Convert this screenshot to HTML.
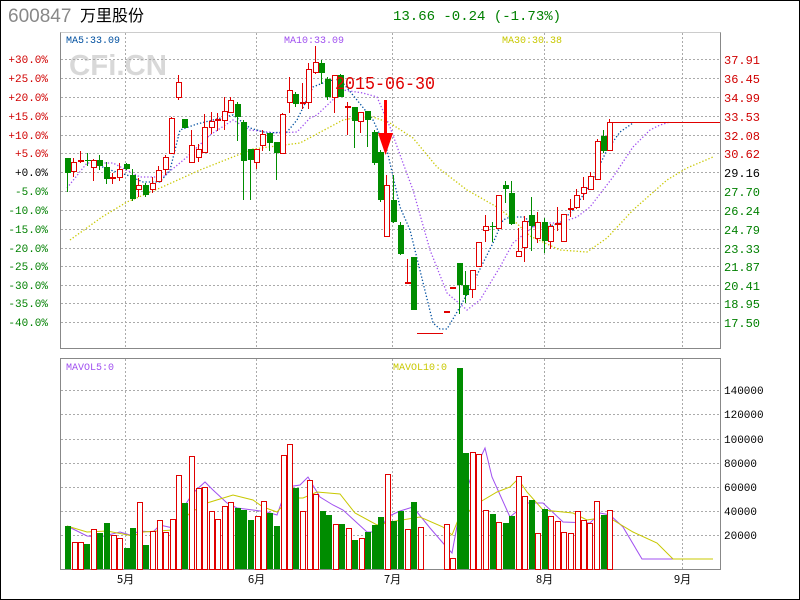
<!DOCTYPE html>
<html><head><meta charset="utf-8">
<style>
html,body{margin:0;padding:0;background:#fff;}
#wrap{position:relative;width:800px;height:600px;overflow:hidden;font-family:"Liberation Mono","WenQuanYi Zen Hei",monospace;}
svg{position:absolute;left:0;top:0;}
</style></head><body>
<div id="wrap">
<svg id="s" width="800" height="600" xmlns="http://www.w3.org/2000/svg" shape-rendering="crispEdges">
<rect x="0.5" y="0.5" width="799" height="599" fill="#fff" stroke="#000"/>
<text x="8" y="22" font-family="Liberation Sans,sans-serif" font-size="19" fill="#888">600847</text>
<text x="80" y="21" font-family="'Noto Sans CJK SC','WenQuanYi Zen Hei',sans-serif" font-size="16" fill="#000">万里股份</text>
<text x="393" y="20" font-family="Liberation Mono,monospace" font-size="14" fill="#008000">13.66 -0.24 (-1.73%)</text>
<text x="69" y="75" font-family="Liberation Sans,sans-serif" font-weight="bold" font-size="29" fill="#d8d8d8" textLength="98" lengthAdjust="spacingAndGlyphs">CFi.CN</text>
<g id="grid" stroke="#aaa" stroke-dasharray="2,2"></g>
<g fill="none" stroke="#888">
<path d="M60.5 32V348.5H720.5V32"/>
<path d="M60.5 358.5H720.5V569.5H60.5Z"/>
<path d="M60.5 32.5H720.5" stroke="#ccc"/>
</g>
<g id="lab" font-family="Liberation Mono,monospace" font-size="11"></g>
<g id="ma" fill="none"></g>
<g id="cd"></g>
<g id="vol"></g>
<text x="66" y="43" font-size="10" fill="#0050a0">MA5:33.09</text>
<text x="284" y="43" font-size="10" fill="#a050f0">MA10:33.09</text>
<text x="502" y="43" font-size="10" fill="#c8c800">MA30:30.38</text>
<text x="66" y="370" font-size="10" fill="#a050f0">MAVOL5:0</text>
<text x="393" y="370" font-size="10" fill="#c8c800">MAVOL10:0</text>
<text x="335" y="89" font-family="Liberation Mono,monospace" font-size="18" fill="#e00000" textLength="100" lengthAdjust="spacingAndGlyphs">2015-06-30</text>
<path d="M384 100h3v33h6l-7.5 22l-7.5-22h6z" fill="#f00" shape-rendering="auto"/>
<g font-family="'Noto Sans CJK SC','WenQuanYi Zen Hei',sans-serif" font-size="11" fill="#000">
<text x="117" y="583">5月</text><text x="248" y="583">6月</text><text x="384" y="583">7月</text><text x="536" y="583">8月</text><text x="674" y="583">9月</text>
</g>
</svg>
</div>
<script>
var NS="http://www.w3.org/2000/svg";
function el(p,t,a,txt){var e=document.createElementNS(NS,t);for(var k in a)e.setAttribute(k,a[k]);if(txt!=null)e.textContent=txt;document.getElementById(p).appendChild(e);return e;}
var gx=[125,256,392,544,682];
gx.forEach(function(x){el('grid','path',{d:'M'+(x+.5)+' 33V348M'+(x+.5)+' 359V569'});});
var py=[59,78,97,116,135,153,172,191,210,229,248,266,285,303,322];
var pl=['+30.0%','+25.0%','+20.0%','+15.0%','+10.0%','+5.0%','+0.0%','-5.0%','-10.0%','-15.0%','-20.0%','-25.0%','-30.0%','-35.0%','-40.0%'];
var pr=['37.91','36.45','34.99','33.53','32.08','30.62','29.16','27.70','26.24','24.79','23.33','21.87','20.41','18.95','17.50'];
py.forEach(function(y,i){el('grid','path',{d:'M61 '+(y+.5)+'H720'});
var c=i<6?'#d00000':(i==6?'#000':'#008000');
el('lab','text',{x:48,y:y+4,'text-anchor':'end',fill:c},pl[i]);
el('lab','text',{x:724,y:y+5,fill:c,'font-size':'12'},pr[i]);});
var vy=[390,414,439,463,487,511,535],vl=['140000','120000','100000','80000','60000','40000','20000'];
vy.forEach(function(y,i){el('grid','path',{d:'M61 '+(y+.5)+'H720'});el('lab','text',{x:724,y:y+4,fill:'#000','font-size':'11'},vl[i]);});
var C=[[67,158,173,158,192,0],[73,162,171,158,177,1],[80,160,162,151,163,1],[87,160,161,153,166,0],[93,160,167,159,181,1],[99,160,166,155,170,0],[106,167,179,162,184,0],[112,177,179,173,184,1],[119,169,177,163,181,1],[126,164,169,163,170,0],[132,175,199,169,201,0],[138,185,189,178,197,1],[145,185,195,183,197,0],[152,183,189,177,193,1],[158,170,181,166,182,1],[165,157,169,155,175,1],[171,118,153,117,154,1],[178,82,97,75,100,1],[184,119,128,119,128,0],[191,145,162,130,162,1],[198,149,157,144,162,1],[204,127,152,114,152,1],[211,121,127,112,134,1],[217,119,121,113,131,1],[224,111,120,97,130,1],[230,100,112,97,113,1],[237,104,117,102,141,0],[243,122,161,120,200,0],[250,149,160,149,200,0],[256,149,162,149,169,1],[262,134,145,130,151,1],[269,133,143,133,151,0],[276,142,153,142,180,0],[282,114,153,113,153,1],[289,90,102,77,113,1],[295,94,104,92,107,0],[302,102,104,83,109,1],[308,69,102,63,109,1],[315,62,72,46,74,1],[321,63,73,60,84,0],[327,79,97,77,100,0],[334,75,97,75,113,1],[340,75,97,74,97,0],[347,106,108,102,135,1],[354,107,121,107,148,0],[360,112,121,112,133,1],[367,111,120,111,147,0],[374,132,163,130,165,0],[380,152,200,150,202,0],[386,185,236,175,236,1],[393,200,222,175,223,0],[400,225,254,222,255,0],[407,282,283,259,283,1],[413,257,310,257,310,0],[446,311,312,311,312,1],[452,287,288,287,288,1],[459,263,285,263,314,0],[465,285,295,271,303,0],[472,270,289,270,298,1],[478,242,266,242,267,1],[485,226,230,215,242,1],[492,226,227,222,242,0],[498,195,228,195,228,1],[505,185,189,181,203,0],[511,193,224,181,225,0],[518,251,256,228,256,1],[524,221,247,216,262,1],[531,215,226,197,251,0],[537,222,238,212,243,1],[544,222,241,218,253,0],[550,226,241,224,249,1],[557,223,225,207,231,1],[563,214,241,214,241,1],[570,208,210,199,217,1],[576,195,207,189,209,1],[583,187,193,177,200,1],[590,176,189,172,189,1],[597,141,179,139,179,1],[603,136,151,130,153,0],[609,122,150,119,150,1]];
var R='#e00000',G='#008c00';
el('cd','path',{d:'M417 333.5H443',stroke:R});
el('cd','path',{d:'M613 122.5H720',stroke:R});
C.forEach(function(c){var x=c[0],col=c[5]?R:G;
el('cd','path',{d:'M'+(x+.5)+' '+c[3]+'V'+c[4],stroke:col});
var h=Math.max(1,c[2]-c[1]);
if(c[5]){if(h<=2)el('cd','rect',{x:x-2,y:c[1],width:6,height:2,fill:R});else el('cd','rect',{x:x-2+.5,y:c[1]+.5,width:5,height:h,fill:'#fff',stroke:R});}
else el('cd','rect',{x:x-2,y:c[1],width:6,height:Math.max(1,h),fill:G});});
var V=[[67,526,0],[74,542,1],[80,542,1],[86,544,0],[93,529,1],[99,533,0],[106,523,0],[113,535,1],[119,538,1],[126,548,0],[132,528,0],[139,502,1],[145,545,0],[152,531,1],[159,520,1],[165,532,1],[172,519,1],[178,475,1],[184,503,0],[191,456,1],[198,488,1],[204,487,1],[211,511,1],[217,519,1],[224,506,1],[230,502,1],[237,508,0],[243,510,0],[250,520,0],[257,516,1],[263,501,1],[269,513,0],[276,526,0],[283,455,1],[289,444,1],[295,488,0],[302,511,1],[309,480,1],[315,494,1],[322,511,0],[328,515,0],[335,524,1],[341,524,0],[348,528,1],[354,540,0],[361,538,1],[367,532,0],[374,525,0],[380,517,0],[387,474,1],[393,521,0],[400,511,0],[407,529,1],[413,502,0],[420,527,1],[446,524,1],[452,558,1],[459,368,0],[465,453,0],[472,452,1],[478,454,1],[485,510,1],[492,514,0],[498,522,1],[505,523,0],[511,516,0],[518,476,1],[524,496,1],[531,500,0],[537,533,1],[544,509,0],[550,516,1],[557,521,1],[563,532,1],[570,533,1],[577,511,1],[583,520,1],[589,523,1],[596,501,1],[603,515,0],[609,510,1]];
V.forEach(function(v){var x=v[0];if(v[2])el('vol','rect',{x:x-2+.5,y:v[1]+.5,width:5,height:569-v[1],fill:'#fff',stroke:R});else el('vol','rect',{x:x-2,y:v[1],width:6,height:569-v[1],fill:G});});
function pl2(pts,col,dash){el('ma','polyline',{points:pts,stroke:col,'stroke-width':dash?1.3:1,'stroke-dasharray':dash?'1.3,2':'none','shape-rendering':'auto'});}
pl2('70,240 102,217 127,202 160,188 200,170 253,149 300,143 343,120 360,117 373,117 390,123 413,138 437,167 467,190 497,207 510,217 530,236 560,250 587,252 607,238 633,210 667,180 687,168 713,157','#c8c800',1);
pl2('67,188 87,163 113,163 140,177 163,177 187,157 210,135 233,120 250,130 277,133 297,132 310,118 317,115 343,90 363,93 377,97 390,127 403,163 413,190 430,250 447,293 467,310 480,300 500,267 513,243 533,227 547,223 560,223 577,217 590,207 613,177 633,147 650,130 660,125 670,122','#a050f0',1);
pl2('93,163 110,170 127,175 143,182 160,182 170,170 180,130 197,124 233,115 250,128 267,133 287,132 297,120 313,87 330,80 343,83 357,100 373,120 387,150 400,207 410,230 433,323 440,329 447,329 460,307 473,283 493,243 503,220 510,217 518,217 525,217 533,227 547,227 560,223 573,210 590,185 607,150 620,132 633,123','#0050a0',1);
pl2('67,526 87,536 100,537 120,532 130,535 140,531 153,532 160,525 173,528 180,513 193,493 205,482 213,490 227,503 237,508 253,510 267,512 277,515 287,487 300,485 308,477 320,497 333,505 343,510 367,532 380,532 387,517 400,511 413,507 430,528 443,543 452,553 460,510 470,480 485,448 492,477 510,517 527,503 543,503 563,522 590,523 600,513 610,515 623,527 642,559 673,559 713,559','#a050f0',0);
pl2('67,526 87,532 107,531 133,536 143,532 173,530 190,513 207,503 233,495 253,500 263,507 277,512 290,498 303,498 317,492 340,494 355,513 377,525 390,522 420,517 443,527 452,535 458,520 480,502 497,492 510,487 518,479 527,492 543,510 573,513 587,520 600,518 613,520 633,532 657,543 673,559 713,559','#c8c800',0);
</script>
</body></html>
